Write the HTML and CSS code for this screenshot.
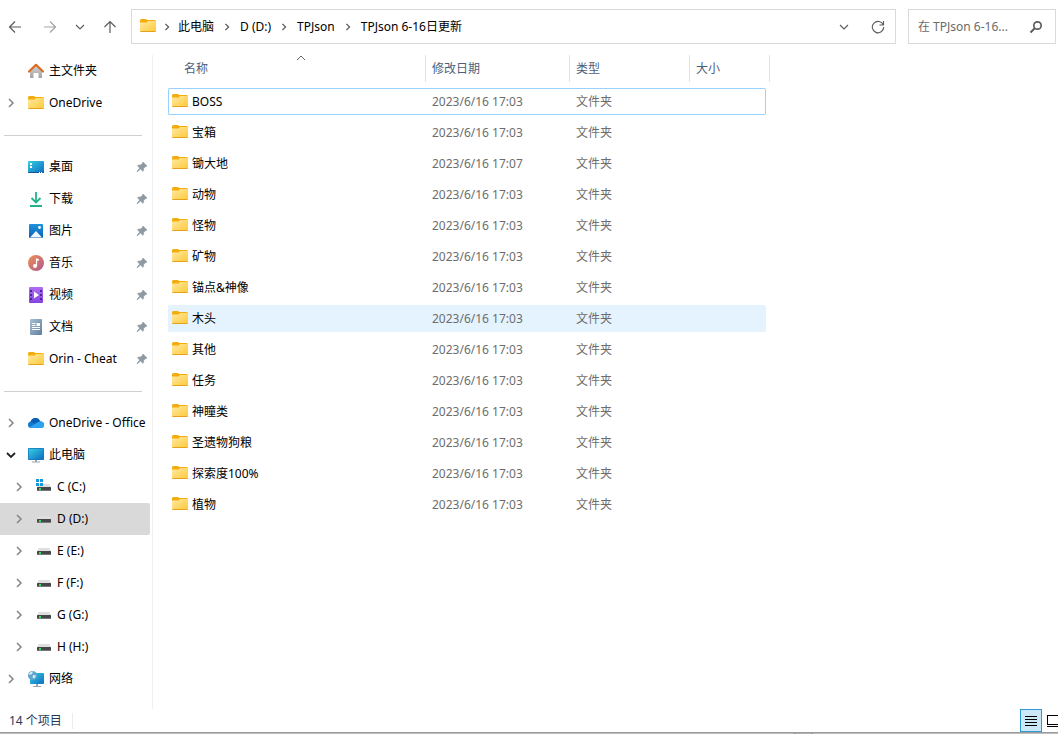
FILE: index.html
```html
<!DOCTYPE html>
<html lang="zh-CN">
<head>
<meta charset="utf-8">
<meta name="viewport" content="width=device-width, initial-scale=1">
<title>TPJson 6-16日更新</title>
<link rel="stylesheet" href="styles.css">
</head>
<body>
<svg class="defs" aria-hidden="true">
  <defs>
    <linearGradient id="g-folder" x1="0" y1="0" x2="1" y2="1"><stop offset="0" stop-color="#ffe9a3"/><stop offset="1" stop-color="#ffc937"/></linearGradient>
    <linearGradient id="g-blue" x1="0" y1="0" x2="1" y2="1"><stop offset="0" stop-color="#35cfe0"/><stop offset="1" stop-color="#0f6cc4"/></linearGradient>
    <linearGradient id="g-pic" x1="0" y1="0" x2="0" y2="1"><stop offset="0" stop-color="#1c94dc"/><stop offset="1" stop-color="#0f62b4"/></linearGradient>
    <linearGradient id="g-music" x1="0" y1="0" x2="1" y2="1"><stop offset="0" stop-color="#ee9152"/><stop offset="1" stop-color="#b0578f"/></linearGradient>
    <linearGradient id="g-video" x1="0" y1="0" x2="0" y2="1"><stop offset="0" stop-color="#b06cf0"/><stop offset="1" stop-color="#8443e0"/></linearGradient>
    <linearGradient id="g-doc" x1="0" y1="0" x2="1" y2="1"><stop offset="0" stop-color="#a9c0d3"/><stop offset="1" stop-color="#5e7f9f"/></linearGradient>
    <linearGradient id="g-wall" x1="0" y1="0" x2="0" y2="1"><stop offset="0" stop-color="#d4d4d4"/><stop offset="1" stop-color="#a3a3a3"/></linearGradient>
    <symbol id="folder" viewBox="0 0 16 16">
      <path d="M0 2.500Q0 1 1.500 1H5.500Q6.500 1 7 2H14.500Q16 2 16 3.500V8H0Z" fill="#f3ac0c"/>
      <path d="M0 4.500H6.500L8 3H15Q16 3 16 4V13Q16 14 15 14H1Q0 14 0 13Z" fill="url(#g-folder)"/>
      <path d="M.5 13.500H15.500" stroke="#e5a11c"/>
    </symbol>
    <symbol id="home" viewBox="0 0 16 16">
      <path d="M2 7.500 8 2l6 5.500V14.500q0 .5-.5.5H10.500V10.500q0-.5-.5-.5H6q-.5 0-.5.5V15H2.500Q2 15 2 14.500Z" fill="url(#g-wall)"/>
      <path d="M1 8.500 8 1.800l7 6.700" fill="none" stroke="#dd6b1f" stroke-width="2.200" stroke-linecap="round" stroke-linejoin="round"/>
    </symbol>
    <symbol id="desktop" viewBox="0 0 16 16">
      <rect y="2" width="16" height="12" rx="1" fill="url(#g-blue)"/>
      <path d="M0 13H16q0 1-1 1H1q-1 0-1-1Z" fill="#10569c"/>
      <path d="M2 4h2v2H2zM2 7h2v2H2zM11 13h1v1h-1zM13 13h1v1h-1z" fill="#fff"/>
    </symbol>
    <symbol id="download" viewBox="0 0 16 16">
      <path d="M8 1v10M3.500 7 8 11.500 12.500 7M2 15H14" fill="none" stroke="#22b58c" stroke-width="1.800"/>
    </symbol>
    <symbol id="picture" viewBox="0 0 16 16">
      <rect x="1" y="1" width="14" height="14" rx="1" fill="url(#g-pic)"/>
      <path d="M2 14.500 8 8l6 6.500Z" fill="#eef8ff"/><circle cx="11.500" cy="4.500" r="1.400" fill="#fff"/>
    </symbol>
    <symbol id="music" viewBox="0 0 16 16">
      <circle cx="8" cy="8" r="8" fill="url(#g-music)"/>
      <path d="M8.500 11V3.500q.5 1.500 2.500 1.500" fill="none" stroke="#fff" stroke-width="1.300"/><circle cx="7" cy="11" r="2" fill="#fff"/>
    </symbol>
    <symbol id="video" viewBox="0 0 16 16">
      <rect x="1" width="14" height="16" rx="1" fill="url(#g-video)"/>
      <path d="M2 3h2v2H2zM2 7h2v2H2zM2 11h2v2H2zM12 3h2v2h-2zM12 7h2v2h-2zM12 11h2v2h-2z" fill="#51259b"/>
      <path d="M6 4.500 11 8l-5 3.500Z" fill="#fff"/>
    </symbol>
    <symbol id="document" viewBox="0 0 16 16">
      <rect x="2" width="12" height="16" rx="1" fill="url(#g-doc)"/>
      <path d="M4 4.500H7.500M4 6.500H7.500M4 8.500H12M4 10.500H12" stroke="#fff"/><path d="M8.500 4H12V7H8.500Z" fill="#fff"/>
    </symbol>
    <symbol id="cloud" viewBox="0 0 16 16">
      <path d="M3.500 13Q0 13 0 9.800 0 7 2.700 6.500 4 3 7.500 3q3.300 0 4.400 3.200Q16 6.500 16 10q0 3-3 3Z" fill="#0f78d0"/>
      <path d="M2.500 6.500Q4 3 7.500 3q3.300 0 4.400 3.200L7.500 9Z" fill="#0b5fb2"/>
      <path d="M1.500 12.300 10 7q6-2 6 3 0 3-3 3H3.500q-1.300 0-2-.7Z" fill="#2ba3ef"/>
    </symbol>
    <symbol id="computer" viewBox="0 0 16 16">
      <path d="M7 13h2v1.500h3V15.500H4V14.500h3Z" fill="#9aa5af"/>
      <rect y="1" width="16" height="12" rx="1" fill="#1471b8"/><rect x=".7" y="1.700" width="14.600" height="10.600" fill="url(#g-blue)"/>
    </symbol>
    <symbol id="drive" viewBox="0 0 16 16">
      <path d="M3 5H13L15 8H1Z" fill="#dedfe1"/><rect x="1" y="8" width="14" height="4" rx=".5" fill="#45474a"/>
      <path d="M1 11.500H15" stroke="#77797b"/><rect x="3" y="9" width="2" height="2" fill="#31e24a"/>
    </symbol>
    <symbol id="system-drive" viewBox="0 0 16 16">
      <use href="#drive"/><path d="M0 0h3v3H0zM4 0h3v3H4zM0 4h3v3H0zM4 4h3v3H4z" fill="#1696dc"/>
    </symbol>
    <symbol id="network" viewBox="0 0 16 16">
      <path d="M8 13h2v2h3v1H5v-1h3Z" fill="#9aa5af"/><rect x="2" y="2" width="14" height="11" rx="1" fill="url(#g-blue)"/>
      <circle cx="4.500" cy="4.500" r="4.500" fill="#5fa5cd"/><path d="M1 2.500Q3 0 5 .5L4 3 1.500 4ZM5 4l3 .5-1.500 3-2-1Z" fill="#d6eef8"/>
    </symbol>
    <symbol id="pin" viewBox="0 0 12 12">
      <path d="M7 1 11 5 10 5.700 9.500 5.500 7.700 7.500 7.500 9.500 6.800 10.200 4.500 8 1.500 10.700 1 10.200 3.700 7.100 1.500 4.800 2.300 4.200 4.300 4.100 6.500 2.500 6.300 1.700Z" fill="#8f9aa3" stroke="#8f9aa3" stroke-width=".6"/>
    </symbol>
    <symbol id="right" viewBox="0 0 10 10"><path d="M3 1 7 5 3 9" fill="none" stroke="currentColor" stroke-width="1.500"/></symbol>
    <symbol id="down" viewBox="0 0 10 10"><path d="M1 3 5 7 9 3" fill="none" stroke="currentColor" stroke-width="1.200"/></symbol>
    <symbol id="down-bold" viewBox="0 0 10 10"><path d="M1 3 5 7 9 3" fill="none" stroke="currentColor" stroke-width="1.800"/></symbol>
    <symbol id="arrow" viewBox="0 0 14 14"><path d="M13 7H1.500M7 1.500 1.500 7 7 12.500" fill="none" stroke="currentColor" stroke-width="1.200"/></symbol>
  </defs>
</svg>

<div class="explorer">
  <header class="toolbar">
    <nav class="history" aria-label="导航">
      <button class="tool back" aria-label="后退"><svg class="i14"><use href="#arrow"/></svg></button>
      <button class="tool forward" aria-label="前进" disabled><svg class="i14"><use href="#arrow"/></svg></button>
      <button class="tool" aria-label="最近浏览的位置"><svg class="i10"><use href="#down"/></svg></button>
      <button class="tool up" aria-label="上移"><svg class="i14"><use href="#arrow"/></svg></button>
    </nav>
    <div class="address">
      <svg class="i16 place"><use href="#folder"/></svg>
      <svg class="crumb-sep lead"><use href="#right"/></svg>
      <a href="#pc">此电脑</a>
      <svg class="crumb-sep"><use href="#right"/></svg>
      <a href="#d">D (D:)</a>
      <svg class="crumb-sep"><use href="#right"/></svg>
      <a href="#tpjson">TPJson</a>
      <svg class="crumb-sep"><use href="#right"/></svg>
      <a href="#current">TPJson 6-16日更新</a>
      <div class="address-actions">
        <button class="tool" aria-label="以前的位置"><svg class="i10"><use href="#down"/></svg></button>
        <button class="tool" aria-label="刷新"><svg class="i14" viewBox="0 0 14 14"><path d="M12.300 5A5.700 5.700 0 1 0 12.700 7M12.500 1V5H8.500" fill="none" stroke="currentColor" stroke-width="1.100"/></svg></button>
      </div>
    </div>
    <form class="search">
      <input type="text" aria-label="搜索" placeholder="在 TPJson 6-16...">
      <button class="tool" type="button" aria-label="搜索"><svg class="i14" viewBox="0 0 14 14"><circle cx="8.500" cy="5.500" r="3.700" fill="none" stroke="currentColor" stroke-width="1.700"/><path d="M6 8 1.500 12.500" stroke="currentColor" stroke-width="2"/></svg></button>
    </form>
  </header>

  <main class="main">
    <nav class="sidebar" aria-label="导航窗格">
      <div class="node"><span class="expander"></span><a href="#home"><svg class="i16"><use href="#home"/></svg>主文件夹</a></div>
      <div class="node"><button class="expander" aria-label="展开"><svg class="i10"><use href="#right"/></svg></button><a href="#od"><svg class="i16"><use href="#folder"/></svg>OneDrive</a></div>
      <hr class="rule">
      <div class="node"><span class="expander"></span><a href="#desk"><svg class="i16"><use href="#desktop"/></svg>桌面</a><svg class="pin"><use href="#pin"/></svg></div>
      <div class="node"><span class="expander"></span><a href="#down"><svg class="i16"><use href="#download"/></svg>下载</a><svg class="pin"><use href="#pin"/></svg></div>
      <div class="node"><span class="expander"></span><a href="#pics"><svg class="i16"><use href="#picture"/></svg>图片</a><svg class="pin"><use href="#pin"/></svg></div>
      <div class="node"><span class="expander"></span><a href="#mus"><svg class="i16"><use href="#music"/></svg>音乐</a><svg class="pin"><use href="#pin"/></svg></div>
      <div class="node"><span class="expander"></span><a href="#vid"><svg class="i16"><use href="#video"/></svg>视频</a><svg class="pin"><use href="#pin"/></svg></div>
      <div class="node"><span class="expander"></span><a href="#docs"><svg class="i16"><use href="#document"/></svg>文档</a><svg class="pin"><use href="#pin"/></svg></div>
      <div class="node"><span class="expander"></span><a href="#orin"><svg class="i16"><use href="#folder"/></svg>Orin - Cheat</a><svg class="pin"><use href="#pin"/></svg></div>
      <hr class="rule">
      <div class="node"><button class="expander" aria-label="展开"><svg class="i10"><use href="#right"/></svg></button><a href="#office"><svg class="i16"><use href="#cloud"/></svg>OneDrive - Office</a></div>
      <div class="node"><button class="expander open" aria-label="折叠"><svg class="i10"><use href="#down-bold"/></svg></button><a href="#pc"><svg class="i16"><use href="#computer"/></svg>此电脑</a></div>
      <div class="node child"><button class="expander" aria-label="展开"><svg class="i10"><use href="#right"/></svg></button><a href="#c"><svg class="i16"><use href="#system-drive"/></svg>C (C:)</a></div>
      <div class="node child selected"><button class="expander" aria-label="展开"><svg class="i10"><use href="#right"/></svg></button><a href="#d"><svg class="i16"><use href="#drive"/></svg>D (D:)</a></div>
      <div class="node child"><button class="expander" aria-label="展开"><svg class="i10"><use href="#right"/></svg></button><a href="#e"><svg class="i16"><use href="#drive"/></svg>E (E:)</a></div>
      <div class="node child"><button class="expander" aria-label="展开"><svg class="i10"><use href="#right"/></svg></button><a href="#f"><svg class="i16"><use href="#drive"/></svg>F (F:)</a></div>
      <div class="node child"><button class="expander" aria-label="展开"><svg class="i10"><use href="#right"/></svg></button><a href="#g"><svg class="i16"><use href="#drive"/></svg>G (G:)</a></div>
      <div class="node child"><button class="expander" aria-label="展开"><svg class="i10"><use href="#right"/></svg></button><a href="#h"><svg class="i16"><use href="#drive"/></svg>H (H:)</a></div>
      <div class="node"><button class="expander" aria-label="展开"><svg class="i10"><use href="#right"/></svg></button><a href="#net"><svg class="i16"><use href="#network"/></svg>网络</a></div>
    </nav>

    <section class="content">
      <table class="files">
        <colgroup><col class="col-name"><col class="col-date"><col class="col-type"><col class="col-size"></colgroup>
        <thead>
          <tr>
            <th scope="col" aria-sort="ascending"><button class="sort first">名称<svg class="sort-mark" viewBox="0 0 10 6"><path d="M1 5 5 1 9 5" fill="none" stroke="currentColor"/></svg></button></th>
            <th scope="col"><button class="sort">修改日期</button></th>
            <th scope="col"><button class="sort">类型</button></th>
            <th scope="col" class="last"><button class="sort">大小</button></th>
          </tr>
        </thead>
        <tbody>
          <tr class="focused"><td><a href="#1"><svg class="i16"><use href="#folder"/></svg>BOSS</a></td><td>2023/6/16 17:03</td><td>文件夹</td><td></td></tr>
          <tr><td><a href="#2"><svg class="i16"><use href="#folder"/></svg>宝箱</a></td><td>2023/6/16 17:03</td><td>文件夹</td><td></td></tr>
          <tr><td><a href="#3"><svg class="i16"><use href="#folder"/></svg>锄大地</a></td><td>2023/6/16 17:07</td><td>文件夹</td><td></td></tr>
          <tr><td><a href="#4"><svg class="i16"><use href="#folder"/></svg>动物</a></td><td>2023/6/16 17:03</td><td>文件夹</td><td></td></tr>
          <tr><td><a href="#5"><svg class="i16"><use href="#folder"/></svg>怪物</a></td><td>2023/6/16 17:03</td><td>文件夹</td><td></td></tr>
          <tr><td><a href="#6"><svg class="i16"><use href="#folder"/></svg>矿物</a></td><td>2023/6/16 17:03</td><td>文件夹</td><td></td></tr>
          <tr><td><a href="#7"><svg class="i16"><use href="#folder"/></svg>锚点&amp;神像</a></td><td>2023/6/16 17:03</td><td>文件夹</td><td></td></tr>
          <tr class="hovered"><td><a href="#8"><svg class="i16"><use href="#folder"/></svg>木头</a></td><td>2023/6/16 17:03</td><td>文件夹</td><td></td></tr>
          <tr><td><a href="#9"><svg class="i16"><use href="#folder"/></svg>其他</a></td><td>2023/6/16 17:03</td><td>文件夹</td><td></td></tr>
          <tr><td><a href="#10"><svg class="i16"><use href="#folder"/></svg>任务</a></td><td>2023/6/16 17:03</td><td>文件夹</td><td></td></tr>
          <tr><td><a href="#11"><svg class="i16"><use href="#folder"/></svg>神瞳类</a></td><td>2023/6/16 17:03</td><td>文件夹</td><td></td></tr>
          <tr><td><a href="#12"><svg class="i16"><use href="#folder"/></svg>圣遗物狗粮</a></td><td>2023/6/16 17:03</td><td>文件夹</td><td></td></tr>
          <tr><td><a href="#13"><svg class="i16"><use href="#folder"/></svg>探索度100%</a></td><td>2023/6/16 17:03</td><td>文件夹</td><td></td></tr>
          <tr><td><a href="#14"><svg class="i16"><use href="#folder"/></svg>植物</a></td><td>2023/6/16 17:03</td><td>文件夹</td><td></td></tr>
        </tbody>
      </table>
    </section>
  </main>

  <footer class="status">
    <span class="count">14 个项目</span>
    <div class="views">
      <button class="view active" aria-label="详细信息"><svg class="i14" viewBox="0 0 14 14"><path d="M1 2.500H13M1 5.500H13M1 8.500H13M1 11.500H13" stroke="#000"/></svg></button>
      <button class="view" aria-label="大缩略图"><svg class="thumb" viewBox="0 0 16 14"><rect x=".5" y="1.500" width="15" height="9" fill="#fff" stroke="#000"/><path d="M0 12.500H16" stroke="#000"/></svg></button>
    </div>
  </footer>
  <div class="frame-edge"><span class="notch"></span></div>
</div>
</body>
</html>
```
FILE: styles.css
```css
* { box-sizing: border-box; }
body {
  margin: 0;
  background: #fff;
  color: #000;
  font: 12px/16px "Noto Sans", "Noto Sans CJK SC", sans-serif;
}
a { color: inherit; text-decoration: none; white-space: nowrap; }
button, input { font: inherit; color: inherit; border: 0; background: none; padding: 0; margin: 0; }
svg { flex: none; display: block; }
.defs { position: absolute; width: 0; height: 0; }
.i16 { width: 16px; height: 16px; }
.i14 { width: 14px; height: 14px; }
.i10 { width: 10px; height: 10px; }

.explorer { display: flex; flex-direction: column; min-height: 100vh; overflow: hidden; }

.toolbar { display: flex; align-items: center; gap: 12px; padding: 9px 2px 7px 0; }
.history { display: flex; margin-right: -6px; }
.tool { flex: none; width: 30px; height: 30px; display: flex; align-items: center; justify-content: center; color: #5c5c5c; }
.back { margin-right: 5px; }
.forward { color: #a3a3a3; }
.forward svg { transform: rotate(180deg); }
.up svg { transform: rotate(90deg); }
.address { flex: 1; display: flex; align-items: center; height: 35px; padding-left: 8px; border: 1px solid #d9d9d9; min-width: 0; }
.place { margin-bottom: 2px; }
.crumb-sep { width: 26px; height: 8px; color: #555; }
.lead { width: 22px; }
.address-actions { display: flex; gap: 4px; margin-left: auto; padding-right: 2px; }
.search { flex: 0 0 148px; min-width: 0; display: flex; align-items: center; height: 35px; padding: 0 4px 0 9px; border: 1px solid #d9d9d9; }
.search input { flex: 1; width: 0; min-width: 0; outline: 0; }
.search input::placeholder { color: #6b6b6b; opacity: 1; }

.main { flex: 1; display: flex; }
.sidebar { flex: 0 0 153px; margin-top: 4px; padding: 0 2px 12px 0; border-right: 1px solid #f0f0f0; }
.node { display: flex; align-items: center; height: 32px; overflow: hidden; border-radius: 0 2px 2px 0; }
.node a { flex: 1; min-width: 0; display: flex; align-items: center; gap: 5px; }
.child { padding-left: 8px; }
.selected { background: #d9d9d9; }
.expander { flex: none; width: 22px; height: 32px; margin-right: 6px; display: flex; align-items: center; justify-content: center; color: #858585; }
.open { color: #222; }
.pin { width: 12px; height: 12px; margin-right: 2px; }
.rule { height: 1px; margin: 16px 8px 15px 4px; border: 0; background: #d0d0d0; }

.content { flex: 1; min-width: 0; padding-left: 15px; }
.files { width: 598px; table-layout: fixed; border-spacing: 0 4px; }
.col-name { width: 258px; }
.col-date { width: 144px; }
.col-type { width: 120px; }
.files th { height: 29px; padding: 0; text-align: left; vertical-align: top; font-weight: normal; color: #4c607a; }
.sort { display: block; position: relative; width: 100%; height: 27px; padding-left: 6px; border-right: 1px solid #e2e2e2; text-align: left; }
.first { width: 250px; margin-left: 8px; padding-left: 8px; }
.last .sort { width: 80px; }
.sort-mark { position: absolute; top: 0; left: 50%; width: 10px; height: 6px; margin-left: -5px; color: #666; }
.files td { height: 27px; padding: 0 0 0 6px; color: #6d6d6d; border: solid transparent; border-width: 1px 0; }
.files td:first-child { padding-left: 3px; border-left-width: 1px; border-radius: 2px 0 0 2px; color: #000; }
.files td:last-child { border-right-width: 1px; border-radius: 0 2px 2px 0; }
.files td a { display: flex; align-items: center; gap: 4px; height: 16px; }
.files td .i16 { margin-bottom: 2px; }
.files .focused td { border-color: #99d1ff; }
.files .hovered td { background: #e5f3ff; border-color: #e5f3ff; }

.status { display: flex; align-items: center; justify-content: space-between; height: 23px; padding-left: 9px; color: #1e395b; }
.count { padding-right: 10px; border-right: 1px solid #ececec; }
.views { display: flex; gap: 2px; margin-right: -8px; }
.view { width: 22px; height: 23px; display: flex; align-items: center; justify-content: center; }
.active { border: 1px solid #2f9bd6; background: #cce8f6; }
.thumb { width: 16px; height: 14px; }
.frame-edge { height: 2px; border-top: 1px solid #9b9b9b; background: #bdbdbd; }
.notch { display: block; width: 19px; height: 1px; margin-left: 75%; background: #b0b0b0; border: solid #8a8a8a; border-width: 0 1px; }
```
